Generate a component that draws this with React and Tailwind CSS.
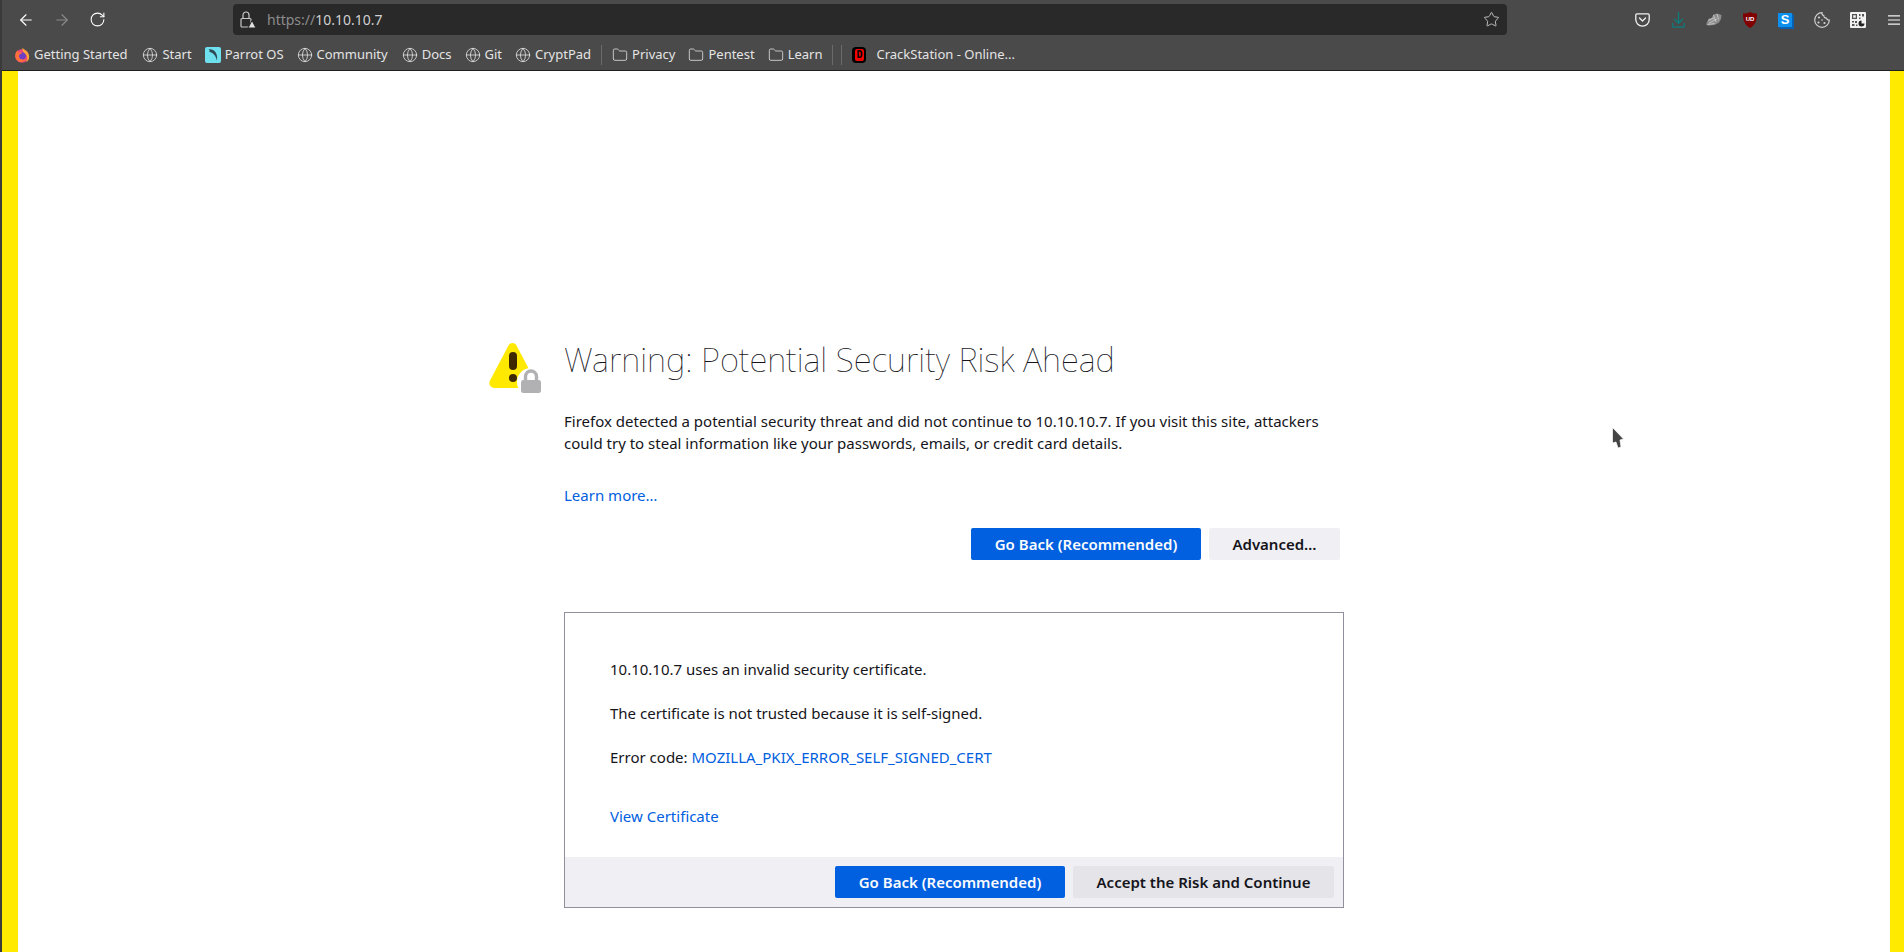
import React from 'react';
import { ArrowLeft, ArrowRight, RotateCw, Star, Globe, Folder } from 'lucide-react';

const FONT = "font-['Noto_Sans',sans-serif]";

function FirefoxLogo() {
  return (
    <svg width="16" height="16" viewBox="0 0 16 16">
      <circle cx="8" cy="9" r="6.800" fill="#f0467a" />
      <circle cx="8.400" cy="8.800" r="3.600" fill="#6c3fc4" />
      <path d="M8.500 0.500c.6 1.700 2.600 2.200 4.200 3.800 2.200 2.200 3 5 2.200 7.400-.5 1.400-1.500 2.600-3 3.300 1.800-2.300 1.800-5.600-.2-7.700C10 5.700 8 4.400 8.500.5z" fill="#ffa436" />
      <path d="M1.400 6.800c.5-1.500 1.400-2.700 2.500-3.500-.2 1.200.2 2 1 2.400 1.200-.7 2.700-.3 3.300.7-1.800 0-3.200 1-3.200 2.800 0 2 1.800 3.500 4 3.500 1.400 0 2.600-.6 3.400-1.600-.6 2.200-2.600 3.800-5 3.800-3.400 0-6-2.600-6-6 0-.9 0-1.300.1-1.900z" fill="#ff7139" />
    </svg>
  );
}

function ParrotLogo() {
  return (
    <svg width="16" height="16" viewBox="0 0 16 16">
      <rect width="16" height="16" rx="2" fill="#6fe0ee" />
      <path d="M3.500 2.500c4-1 7 1.400 8.200 5.200.5 1.800.5 3.800.3 6-.6-2.200-1.200-4-2.400-5.500C8.300 6.500 6.400 5.100 4.200 4.900 5 4.200 5 3.200 3.500 2.500z" fill="#2f4a55" />
    </svg>
  );
}

function CrackStationLogo() {
  return (
    <span className="flex h-[16px] w-[14px] items-center justify-center rounded-[4px] bg-black">
      <span className="flex h-[12px] w-[9px] items-center justify-center rounded-[2px] bg-[#f40000] font-['DejaVu_Sans_Mono',monospace] text-[10px] font-bold leading-none text-black">D</span>
    </span>
  );
}

function PocketIcon() {
  return (
    <svg width="15" height="14" viewBox="0 0 15 14" fill="none" stroke="#f2f2f2" strokeWidth="1.300">
      <path d="M2 .8h11c.7 0 1.200.5 1.200 1.200v4.500c0 3.700-3 6.700-6.700 6.700S.8 10.200.8 6.500V2C.8 1.300 1.300.8 2 .8z" />
      <path d="M4.500 5 7.500 8l3-3" strokeLinecap="round" strokeLinejoin="round" />
    </svg>
  );
}

function DownloadIcon() {
  return (
    <svg width="13" height="16" viewBox="0 0 13 16" fill="none" stroke="#0e7c7c" strokeWidth="1.300">
      <path d="M6.500 0v11M2 6.800l4.500 4.500L11 6.800" />
      <path d="M.7 11v3c0 .7.4 1.200 1 1.200h9.600c.6 0 1-.5 1-1.200v-3" />
    </svg>
  );
}

function ShoeIcon() {
  return (
    <svg width="16" height="14" viewBox="0 0 16 14" fill="none">
      <path d="M.5 10 3 5.500 5.500 5 7.500 1.500 11 .5l4.500 1.500-.5 4-2 3.500-4.500 2.500-6 .5L.5 12z" fill="#8c8c8c" />
      <path d="M2 7.500l6-2.500M3 10l8-4M7.500 2l2.500 7M11 1l1.500 5.500M1.500 11.500l7-1" stroke="#d0d0d0" strokeWidth="0.800" />
    </svg>
  );
}

function UblockIcon() {
  return (
    <svg width="14" height="16" viewBox="0 0 14 16">
      <path d="M7 0c1.800 1 4.200 1.500 7 1.600 0 6.500-1.300 11.200-7 14.400C1.300 12.800 0 8.100 0 1.600 2.800 1.500 5.200 1 7 0z" fill="#800000" />
      <text x="7" y="9" textAnchor="middle" fontSize="6" fontWeight="700" fill="#fff" fontFamily="Liberation Sans, sans-serif">UD</text>
    </svg>
  );
}

function StylusIcon() {
  return (
    <span className="flex h-[14px] w-[14px] items-center justify-center bg-[#0d8fee] font-['Liberation_Sans',sans-serif] text-[13px] font-bold leading-none text-white shadow-[1px_1px_0_#0a5fb0,2px_2px_0_#0a5fb0]">S</span>
  );
}

function CookieIcon() {
  return (
    <svg width="16" height="16" viewBox="0 0 16 16" fill="none" stroke="#d0d0d0" strokeWidth="1.200">
      <path d="M8 .7a7.300 7.300 0 1 0 7.300 7.300c-1.500.2-2.600-.6-2.800-1.900-1.500.2-2.800-.9-2.700-2.500C8.500 3.300 7.700 2.200 8 .7z" />
      <circle cx="5" cy="5.500" r="1.100" fill="#d0d0d0" stroke="none" />
      <circle cx="4.500" cy="10.500" r="1.100" fill="#d0d0d0" stroke="none" />
      <circle cx="10.500" cy="11" r="1.100" fill="#d0d0d0" stroke="none" />
      <circle cx="8" cy="8" r=".8" fill="#d0d0d0" stroke="none" />
    </svg>
  );
}

function QrIcon() {
  return (
    <svg width="16" height="16" viewBox="0 0 16 16">
      <rect width="16" height="16" rx="1" fill="#f2f2f2" />
      <path d="M2 2h5v5H2zM3.200 3.200v2.600h2.600V3.200z" fill="#555" fillRule="evenodd" />
      <path d="M9 2h1.500v2H9zM12 2h2v2.500h-2zM9 5.500h1.500V7H9zM2 9h2v1.500H2zM5 9h2v2H5zM2 12h2.500v2H2zM6 12.500h1.500V14H6z" fill="#555" />
      <path d="M11.500 8.500V11.500H14.500A3 3 0 1 1 11.500 8.500z" fill="#222" />
    </svg>
  );
}

function MenuIcon() {
  return (
    <svg width="12" height="10" viewBox="0 0 12 10" stroke="#f2f2f2" strokeWidth="1.200">
      <path d="M0 .8h12M0 5h12M0 9.200h12" />
    </svg>
  );
}

function WarningIcon() {
  return (
    <svg width="54" height="52" viewBox="0 0 54 52">
      <path d="M20.500 3.500c1.800-3.200 6.200-3.200 8 0l18.500 35c1.800 3.500-.4 7.500-4.400 7.500H6.400C2.400 46 .2 42 2 38.500z" fill="#ffe900" />
      <rect x="21" y="10" width="8" height="18" rx="4" fill="#3e2800" />
      <circle cx="25" cy="36" r="4" fill="#3e2800" />
      <circle cx="43" cy="40" r="14" fill="#fff" />
      <rect x="33" y="38" width="20" height="13" rx="2.500" fill="#b1b1b3" />
      <path d="M37.500 39v-4.500a5.500 5.500 0 0 1 11 0V39" fill="none" stroke="#b1b1b3" strokeWidth="3.400" />
    </svg>
  );
}

function Bookmark({ icon, label, className = '' }) {
  return (
    <div className={`flex items-center gap-[4px] ${className}`}>
      {icon}
      <span>{label}</span>
    </div>
  );
}

const globe = <Globe size={16} strokeWidth={1.200} />;
const folder = <Folder size={16} strokeWidth={1.200} />;

function PrimaryButton({ children }) {
  return <button className="h-[32px] w-[230px] rounded-[2px] bg-[#0060df] text-[15px] font-semibold text-[#fbfbfe]">{children}</button>;
}

export default function App() {
  return (
    <div className={`relative flex h-[952px] w-[1904px] flex-col overflow-hidden border-l-2 border-[#3a3a3a] bg-white ${FONT}`}>
      {/* browser chrome */}
      <div className="h-[71px] shrink-0 border-b border-[#1f1f1f] bg-[#4a4a4a] text-[#f2f2f2]">
        <div className="flex h-[39px] items-center">
          <div className="flex w-[231px] items-center pl-[15px]">
            <ArrowLeft size={18} strokeWidth={1.500} className="text-white" />
            <ArrowRight size={18} strokeWidth={1.500} className="ml-[18px] text-[#8a8a8a]" />
            <RotateCw size={17} strokeWidth={1.500} className="ml-[18px] text-white" />
          </div>
          <div className="flex h-[31px] w-[1274px] items-center rounded-[4px] bg-[#292929] pl-[7px] pr-[7px] text-[14px]">
            <svg width="16" height="18" viewBox="0 0 16 18" fill="none" stroke="#c8c8c8" strokeWidth="1.200">
              <rect x="1" y="7.500" width="10" height="8.500" rx="1" />
              <path d="M3 7.500V4a3 3 0 0 1 6 0v3.500" />
              <path d="M12 9.500l4 7.500H8z" fill="#e0e0e0" stroke="#292929" strokeWidth="1" />
            </svg>
            <span className="ml-[11px] text-[#8c8c8c]">https://</span>
            <span className="text-[#d0d0d0]">10.10.10.7</span>
            <Star size={17} strokeWidth={1.300} className="ml-auto text-[#c8c8c8]" />
          </div>
          <div className="flex flex-1 items-center pl-[128px]">
            <div className="flex w-[37px]"><PocketIcon /></div>
            <div className="flex w-[34px]"><DownloadIcon /></div>
            <div className="flex w-[37px]"><ShoeIcon /></div>
            <div className="flex w-[35px]"><UblockIcon /></div>
            <div className="flex w-[36px]"><StylusIcon /></div>
            <div className="flex w-[36px]"><CookieIcon /></div>
            <div className="flex w-[38px]"><QrIcon /></div>
            <MenuIcon />
          </div>
        </div>
        <div className="flex h-[32px] items-center pl-[12px] text-[13px] text-[#e4e4e4]">
          <Bookmark icon={<FirefoxLogo />} label="Getting Started" />
          <Bookmark icon={globe} label="Start" className="ml-[15px]" />
          <Bookmark icon={<ParrotLogo />} label="Parrot OS" className="ml-[13px]" />
          <Bookmark icon={globe} label="Community" className="ml-[13px]" />
          <Bookmark icon={globe} label="Docs" className="ml-[14px]" />
          <Bookmark icon={globe} label="Git" className="ml-[13px]" />
          <Bookmark icon={globe} label="CryptPad" className="ml-[13px]" />
          <div className="ml-[10px] h-[20px] w-px bg-[#6a6a6a]" />
          <Bookmark icon={folder} label="Privacy" className="ml-[10px]" />
          <Bookmark icon={folder} label="Pentest" className="ml-[13px]" />
          <Bookmark icon={folder} label="Learn" className="ml-[13px]" />
          <div className="ml-[10px] h-[20px] w-px bg-[#6a6a6a]" />
          <div className="ml-[8px] h-[20px] w-px bg-[#6a6a6a]" />
          <Bookmark icon={<CrackStationLogo />} label="CrackStation - Online..." className="ml-[10px] gap-[10px]" />
        </div>
      </div>

      {/* error page */}
      <div className="flex flex-1">
        <div className="w-[16px] shrink-0 bg-[#ffea00]" />
        <div className="flex-1 pl-[470px] pt-[266px] text-[15px] text-[#15141a]">
          <div className="relative flex w-[876px] flex-col pl-[76px]">
            <div className="absolute left-0 top-[5px]"><WarningIcon /></div>
            <h1 className="text-[33px] font-thin leading-[46px] text-[#15141a]">Warning: Potential Security Risk Ahead</h1>
            <p className="mt-[27px] w-[790px] leading-[22px]">
              Firefox detected a potential security threat and did not continue to 10.10.10.7. If you visit this site, attackers could try to steal information like your passwords, emails, or credit card details.
            </p>
            <a className="mt-[30px] leading-[22px] text-[#0060df]">Learn more…</a>
            <div className="mt-[22px] flex w-[776px] justify-end gap-[8px]">
              <PrimaryButton>Go Back (Recommended)</PrimaryButton>
              <button className="h-[32px] w-[131px] rounded-[2px] bg-[#f0f0f4] font-semibold">Advanced…</button>
            </div>
            <div className="mt-[52px] w-[780px] border border-[#8f8f9d]">
              <div className="px-[45px] pt-[45px]">
                <p className="leading-[22px]">10.10.10.7 uses an invalid security certificate.</p>
                <p className="mt-[22px] leading-[22px]">The certificate is not trusted because it is self-signed.</p>
                <p className="mt-[22px] leading-[22px]">Error code: <a className="text-[#0060df]">MOZILLA_PKIX_ERROR_SELF_SIGNED_CERT</a></p>
                <a className="mt-[37px] block leading-[22px] text-[#0060df]">View Certificate</a>
              </div>
              <div className="mt-[30px] flex h-[50px] items-center justify-end gap-[8px] bg-[#f0f0f4] pr-[9px]">
                <PrimaryButton>Go Back (Recommended)</PrimaryButton>
                <button className="h-[32px] w-[261px] rounded-[2px] bg-[#e4e4e9] font-semibold">Accept the Risk and Continue</button>
              </div>
            </div>
          </div>
        </div>
        <div className="w-[14px] shrink-0 bg-[#ffea00]" />
      </div>

      {/* mouse pointer */}
      <svg className="absolute left-[1609px] top-[426px]" width="14" height="24" viewBox="0 0 14 24">
        <path d="M1.500 1.500 12.500 13 9 14l1 7-3 1-2-6-3.500 1z" fill="#444" stroke="#fff" strokeOpacity="0.700" strokeWidth="1" />
      </svg>
    </div>
  );
}
